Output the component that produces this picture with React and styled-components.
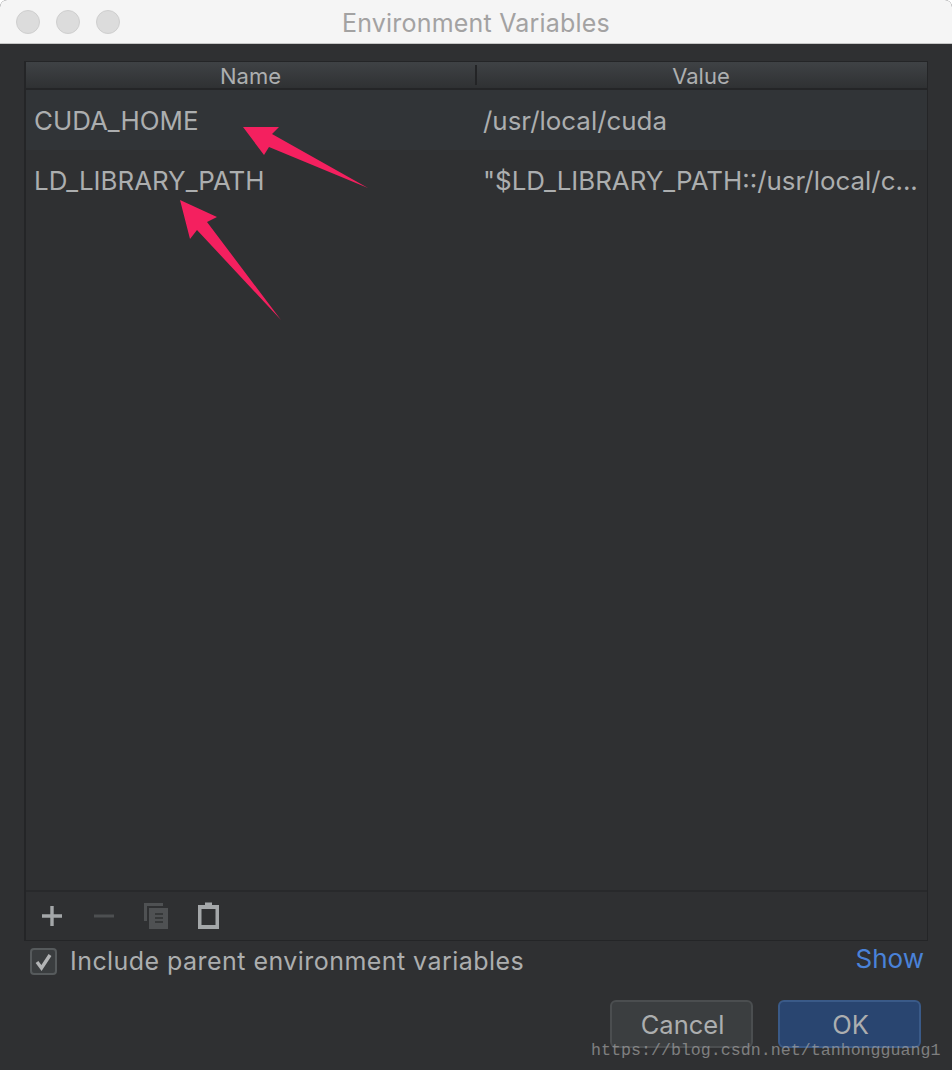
import React from "react";
import styled, { createGlobalStyle } from "styled-components";

const Global = createGlobalStyle`
  html, body { margin: 0; padding: 0; background: #fff; }
  #root { width: 952px; height: 1070px; overflow: hidden; }
  * { box-sizing: border-box; }
`;

const Window = styled.div`
  position: relative;
  width: 952px;
  height: 1070px;
  display: flex;
  flex-direction: column;
  background: #2f3032;
  font-family: Inter, "Liberation Sans", sans-serif;
  border-radius: 7px 7px 0 0;
  overflow: hidden;
`;

const TitleBar = styled.header`
  position: relative;
  flex: 0 0 44px;
  display: flex;
  align-items: center;
  justify-content: center;
  padding-top: 3px;
  background: #f5f5f5;
  border-bottom: 1px solid #c6c6c6;
`;

const Lights = styled.div`
  position: absolute;
  left: 16px;
  top: 10px;
  display: flex;
  gap: 16px;
`;

const Light = styled.span`
  width: 24px;
  height: 24px;
  border-radius: 50%;
  background: #dcdcdc;
  border: 1px solid #cfcfcf;
`;

const Title = styled.h1`
  margin: 0;
  font-size: 25px;
  font-weight: 400;
  color: #a3a2a2;
  letter-spacing: 0.2px;
`;

const Content = styled.main`
  flex: 1;
  display: flex;
  flex-direction: column;
  padding: 17px 25px 0 24px;
`;

const Table = styled.section`
  height: 880px;
  display: flex;
  flex-direction: column;
  border: 1px solid #242527;
  border-left-width: 2px;
  width: 904px;
`;

const Head = styled.div`
  flex: 0 0 28px;
  min-height: 0;
  display: grid;
  grid-template-columns: 449px 1fr;
  background: linear-gradient(#3f4245, #2f3133);
  border-bottom: 2px solid #242527;
`;

const HeadCell = styled.div`
  display: flex;
  align-items: center;
  justify-content: center;
  font-size: 22px;
  line-height: 22px;
  color: #adafb0;
  padding-top: 2px;
  position: relative;
  & + &::before {
    content: "";
    position: absolute;
    left: 0;
    top: 3px;
    bottom: 3px;
    width: 2px;
    background: #232426;
  }
`;

const Rows = styled.div`
  flex: 1;
  display: flex;
  flex-direction: column;
`;

const Row = styled.div`
  flex: 0 0 60px;
  display: grid;
  grid-template-columns: 449px 1fr;
  align-items: center;
  padding-top: 1px;
  background: ${(p) => (p.$shaded ? "#313437" : "transparent")};
  font-size: 25.9px;
  color: #acaeaf;
`;

const NameCell = styled.div`
  padding-left: 8px;
  white-space: nowrap;
`;

const ValueCell = styled.div`
  padding-left: 8px;
  white-space: nowrap;
`;

const Toolbar = styled.div`
  flex: 0 0 50px;
  display: flex;
  align-items: center;
  border-top: 2px solid #28292b;
  padding-left: 15px;
`;

const Tool = styled.span`
  width: ${(p) => p.$w || 52}px;
  height: 30px;
  display: flex;
  align-items: center;
`;

const OptionRow = styled.div`
  display: flex;
  align-items: center;
  justify-content: space-between;
  width: 900px;
  padding: 2px 0 0 6px;
  height: 38px;
`;

const CheckLabel = styled.label`
  display: flex;
  align-items: center;
  gap: 13px;
  font-size: 25px;
  color: #acaeaf;
  letter-spacing: 0.45px;
`;

const CheckBox = styled.span`
  width: 27px;
  height: 27px;
  display: flex;
  align-items: center;
  justify-content: center;
  border: 2px solid #565a5c;
  border-radius: 4px;
  background: #3a3d3f;
`;

const ShowLink = styled.a`
  font-size: 26px;
  color: #4a82d8;
  position: relative;
  top: -3px;
`;

const Actions = styled.div`
  display: flex;
  justify-content: flex-end;
  gap: 25px;
  width: 897px;
  margin-top: 21px;
`;

const Button = styled.button`
  width: 143px;
  height: 48px;
  border-radius: 6px;
  font: inherit;
  font-size: 25.5px;
  color: #acaeaf;
  padding: 0 0 0 2px;
  border: 2px solid ${(p) => (p.$primary ? "#3a5a88" : "#4b4e50")};
  background: ${(p) => (p.$primary ? "#294570" : "#3b3e40")};
`;

const ArrowLayer = styled.svg`
  position: absolute;
  left: 0;
  top: 0;
  pointer-events: none;
`;

const Watermark = styled.div`
  position: absolute;
  left: 591px;
  top: 1041px;
  font-family: "Liberation Mono", "DejaVu Sans Mono", monospace;
  font-size: 16.65px;
  color: #a0a0a0;
  opacity: 0.7;
  white-space: nowrap;
`;

export default function App() {
  return (
    <Window>
      <Global />
      <TitleBar>
        <Lights>
          <Light />
          <Light />
          <Light />
        </Lights>
        <Title>Environment Variables</Title>
      </TitleBar>
      <Content>
        <Table>
          <Head>
            <HeadCell>Name</HeadCell>
            <HeadCell>Value</HeadCell>
          </Head>
          <Rows>
            <Row $shaded>
              <NameCell>CUDA_HOME</NameCell>
              <ValueCell>/usr/local/cuda</ValueCell>
            </Row>
            <Row>
              <NameCell>LD_LIBRARY_PATH</NameCell>
              <ValueCell>"$LD_LIBRARY_PATH::/usr/local/c...</ValueCell>
            </Row>
          </Rows>
          <Toolbar>
            <Tool>
              <svg width="22" height="22" viewBox="0 0 22 22" fill="#a4a7a9">
                <path d="M9.300 1h3.400v8.300H21v3.400h-8.300V21H9.300v-8.300H1V9.300h8.300z" />
              </svg>
            </Tool>
            <Tool $w={51}>
              <svg width="22" height="22" viewBox="0 0 22 22" fill="#4d4f51">
                <path d="M1 9.500h20v3H1z" />
              </svg>
            </Tool>
            <Tool $w={54}>
              <svg width="25" height="27" viewBox="0 0 25 27" fill="#4f5153">
                <path d="M0 0h19v3H3v15H0z" />
                <path d="M5 5h19v21H5z" />
                <path d="M11 11h8M11 15h8M11 19h8" stroke="#2f3032" strokeWidth="1.600" />
              </svg>
            </Tool>
            <Tool>
              <svg width="21" height="29" viewBox="0 0 21 29" fill="#a4a7a9">
                <path fillRule="evenodd" d="M7 0.500h7V3h7v24H0V3h7zM3.500 7v16h14V7z" />
              </svg>
            </Tool>
          </Toolbar>
        </Table>
        <OptionRow>
          <CheckLabel>
            <CheckBox>
              <svg width="19" height="19" viewBox="0 0 19 19" fill="none">
                <path d="M3 10l4.500 6L16 3" stroke="#b2b4b5" strokeWidth="3.400" />
              </svg>
            </CheckBox>
            Include parent environment variables
          </CheckLabel>
          <ShowLink>Show</ShowLink>
        </OptionRow>
        <Actions>
          <Button>Cancel</Button>
          <Button $primary>OK</Button>
        </Actions>
      </Content>
      <ArrowLayer width="952" height="1070" viewBox="0 0 952 1070">
        <path fill="#f4205f" d="M243 127L279 127L272 134L368 188L269 147L264 155Z" />
        <path fill="#f4205f" d="M180 200L217 217L207 222L281 320L197 230L190 239Z" />
      </ArrowLayer>
      <Watermark>https://blog.csdn.net/tanhongguang1</Watermark>
    </Window>
  );
}
